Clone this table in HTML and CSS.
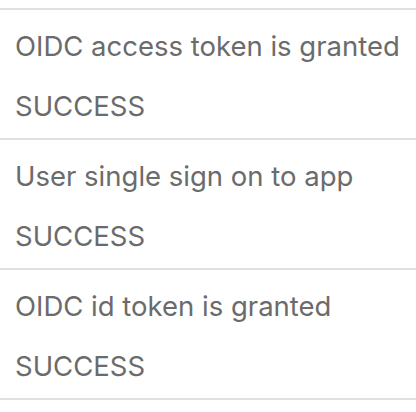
FILE: index.html
```html
<!DOCTYPE html>
<html>
<head>
    <meta charset="UTF-8">
    <title>Events</title>
    <link rel="stylesheet" href="styles.css">
</head>
<body>
    <div class="event-list">
        <div class="event">
            <div class="event-name">OIDC access token is granted</div>
            <div class="event-status">SUCCESS</div>
        </div>
        <div class="event">
            <div class="event-name">User single sign on to app</div>
            <div class="event-status">SUCCESS</div>
        </div>
        <div class="event">
            <div class="event-name">OIDC id token is granted</div>
            <div class="event-status">SUCCESS</div>
        </div>
    </div>
</body>
</html>
```

FILE: styles.css
```css
body {
    margin: 0;
    background-color: #fff;
    color: #6b6b6b;
    font-family: Inter, "Noto Sans", sans-serif;
}

.event-list {
    margin-top: 8px;
    border-bottom: 2px solid #e0e0e0;
}

.event {
    border-top: 2px solid #e0e0e0;
    padding: 6px 12px 2px 15px;
}

.event-name,
.event-status {
    font-size: 27.5px;
    line-height: 60px;
    white-space: nowrap;
}
```
